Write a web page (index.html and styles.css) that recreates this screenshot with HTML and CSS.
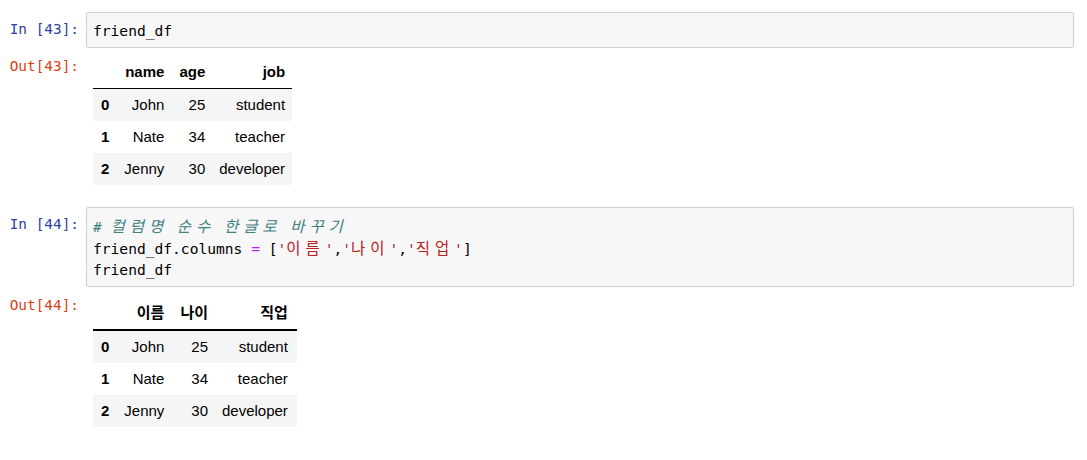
FILE: index.html
```html
<!DOCTYPE html>
<html lang="ko">
<head>
<meta charset="utf-8">
<link rel="stylesheet" href="styles.css">
</head>
<body>
<div class="notebook">
  <div class="cell first">
    <div class="row">
      <div class="prompt in-prompt">In [43]:</div>
      <div class="input-box"><pre class="code">friend_df</pre></div>
    </div>
    <div class="row output">
      <div class="prompt out-prompt">Out[43]:</div>
      <div class="output-body">
        <table class="df">
          <thead>
            <tr><th></th><th>name</th><th>age</th><th>job</th></tr>
          </thead>
          <tbody>
            <tr><th>0</th><td>John</td><td>25</td><td>student</td></tr>
            <tr><th>1</th><td>Nate</td><td>34</td><td>teacher</td></tr>
            <tr><th>2</th><td>Jenny</td><td>30</td><td>developer</td></tr>
          </tbody>
        </table>
      </div>
    </div>
  </div>

  <div class="cell second">
    <div class="row">
      <div class="prompt in-prompt">In [44]:</div>
      <div class="input-box"><pre class="code"><span class="c"># <span class="ko">컬럼명</span> <span class="ko">순수</span> <span class="ko">한글로</span> <span class="ko">바꾸기</span></span>
friend_df.columns <span class="o">=</span> [<span class="s">'<span class="ko">이름</span>'</span>,<span class="s">'<span class="ko">나이</span>'</span>,<span class="s">'<span class="ko">직업</span>'</span>]
friend_df</pre></div>
    </div>
    <div class="row output">
      <div class="prompt out-prompt">Out[44]:</div>
      <div class="output-body">
        <table class="df df-ko">
          <thead>
            <tr><th></th><th>이름</th><th>나이</th><th>직업</th></tr>
          </thead>
          <tbody>
            <tr><th>0</th><td>John</td><td>25</td><td>student</td></tr>
            <tr><th>1</th><td>Nate</td><td>34</td><td>teacher</td></tr>
            <tr><th>2</th><td>Jenny</td><td>30</td><td>developer</td></tr>
          </tbody>
        </table>
      </div>
    </div>
  </div>
</div>
</body>
</html>
```

FILE: styles.css
```css
html, body {
  margin: 0;
  padding: 0;
  background: #ffffff;
}

.notebook {
  padding: 12px 13px 0 0;
}

.cell.second {
  margin-top: 22px;
}

.row {
  display: flex;
  align-items: flex-start;
}

.prompt {
  width: 79px;
  flex: none;
  padding-right: 7px;
  text-align: right;
  font-family: "DejaVu Sans Mono", "Liberation Mono", monospace;
  font-size: 14.4px;
  line-height: 21px;
  white-space: pre;
}

.in-prompt {
  color: #303f9f;
  padding-top: 7px;
}

.out-prompt {
  color: #d84315;
}

.input-box {
  flex: 1;
  background: #f7f7f7;
  border: 1px solid #cfcfcf;
  border-radius: 2px;
  padding: 7px 6px 6px 6px;
}

.code {
  margin: 0;
  font-family: "DejaVu Sans Mono", "Liberation Mono", "Noto Sans CJK KR", monospace;
  font-size: 14.6px;
  line-height: 21px;
  color: #000;
  white-space: pre;
}

.ko {
  font-family: "Noto Sans CJK KR", sans-serif;
  font-size: 15.5px;
  letter-spacing: 4.9px;
}

.c {
  color: #408080;
  font-style: italic;
}

.o {
  color: #aa22ff;
}

.s {
  color: #ba2121;
}

.output {
  margin-top: 8px;
}

.output-body {
  padding-left: 7px;
}

.df {
  border-collapse: collapse;
  border-spacing: 0;
  font-family: "Liberation Sans", Arial, "Noto Sans CJK KR", sans-serif;
  font-size: 15px;
  color: #000;
}

.df th,
.df td {
  padding: 7px;
  line-height: 18px;
  text-align: right;
  vertical-align: middle;
  white-space: nowrap;
}

.df th {
  font-weight: bold;
}

.df tbody th {
  padding-left: 8px;
  padding-right: 8px;
}

.df thead th {
  border-bottom: 1px solid #000;
}

.df thead th:nth-child(n+3) {
  padding-left: 8px;
}

.df-ko thead th {
  padding-top: 8px;
  padding-bottom: 8px;
  border-bottom: 2px solid #000;
  font-family: "Noto Sans CJK KR", sans-serif;
}

.df-ko thead th:nth-child(n+3) {
  padding-left: 9px;
}

.df-ko thead th:last-child {
  padding-left: 10px;
  padding-right: 9px;
}

.df-ko tbody td:last-child {
  padding-right: 9px;
}

.df tbody tr:nth-child(odd) {
  background: #f5f5f5;
}
```
